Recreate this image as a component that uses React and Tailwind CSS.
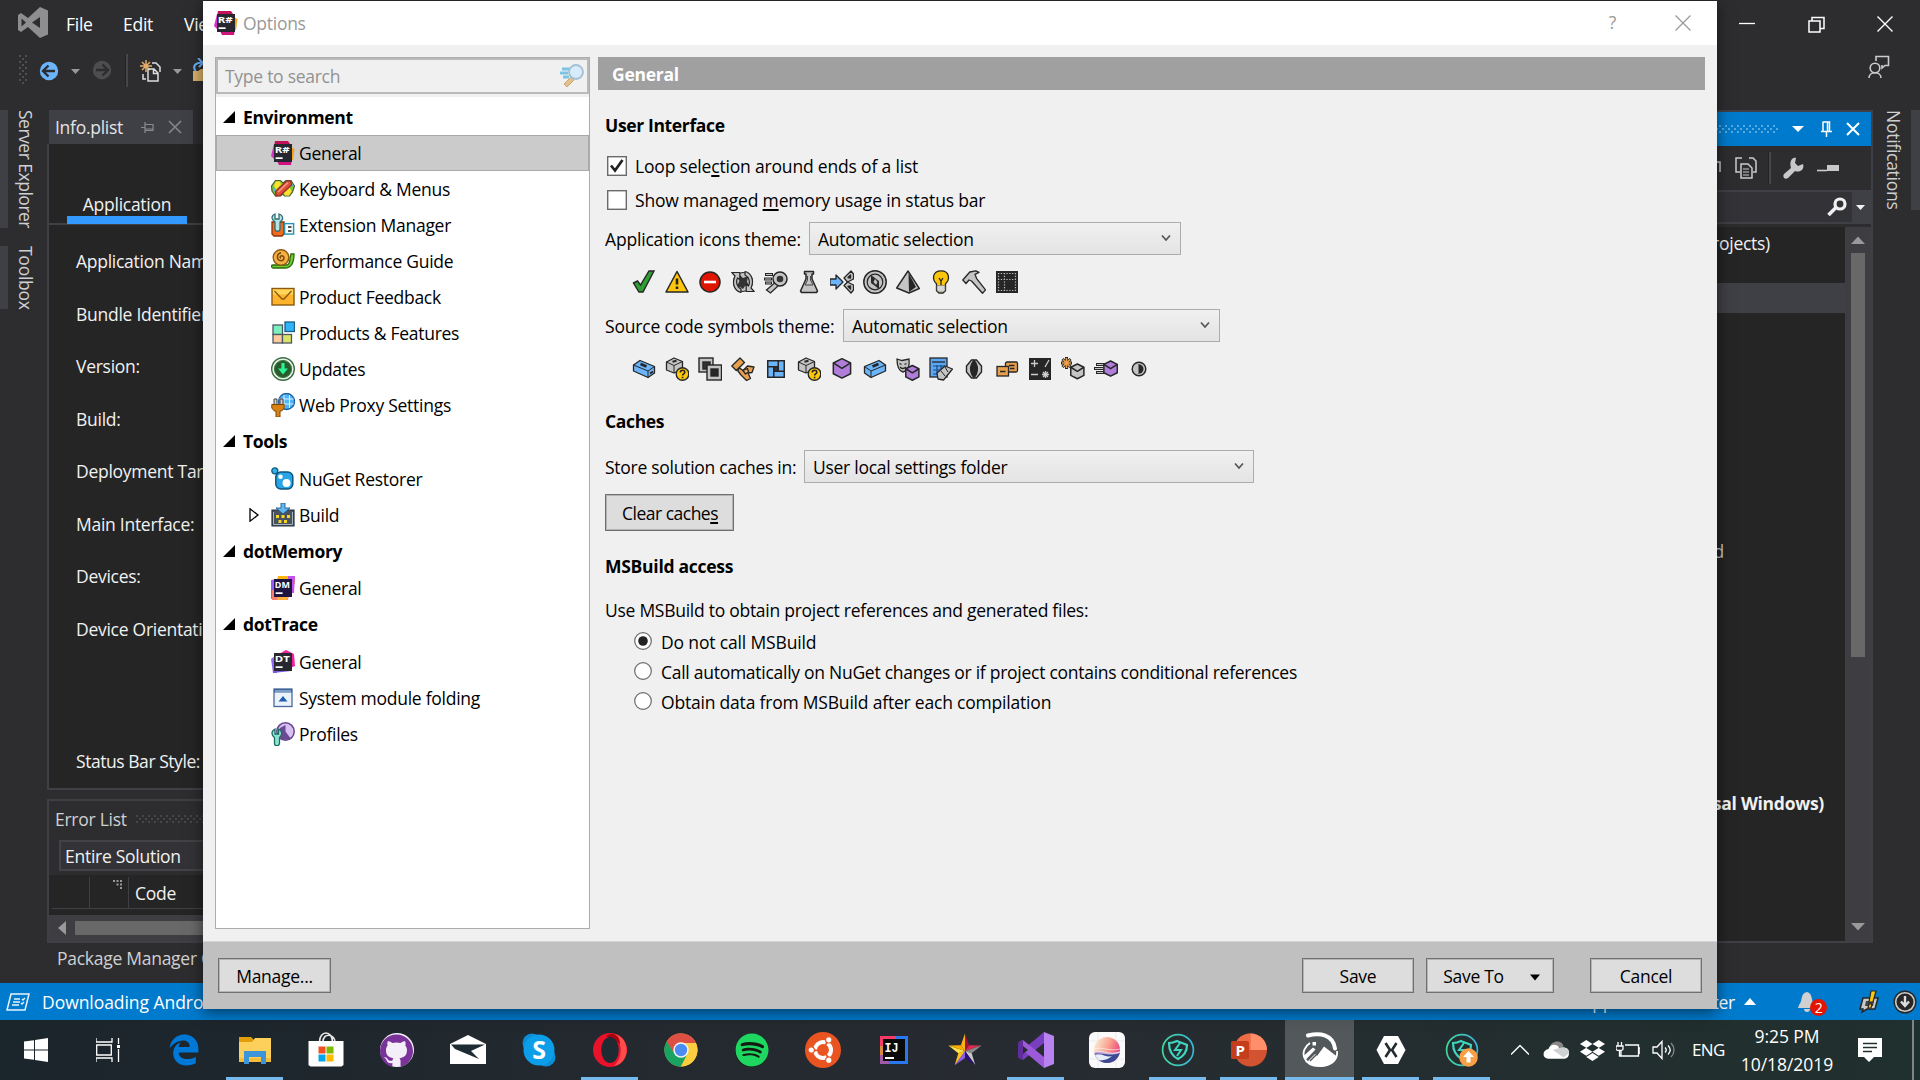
import React from "react";
import { FaSpotify, FaDropbox, FaEdgeLegacy } from "react-icons/fa6";
import { SiGithub } from "react-icons/si";

const K = "#262626";
const G = "#c4c4c4";

function Svg({ s = 24, vb = "0 0 24 24", className = "", children }) {
  return (
    <svg width={s} height={s} viewBox={vb} fill="none" className={"shrink-0 " + className}>
      {children}
    </svg>
  );
}

/* ---------- product badges ---------- */

function Badge({ label, back, dark = "#27282f" }) {
  return (
    <Svg>
      {back}
      <rect x="3" y="3" width="18" height="18" fill={dark} />
      <text x="3.8" y="11.8" fontSize="9.500" fontWeight="700" fill="#fff" letterSpacing="0" fontFamily="Open Sans, sans-serif" textLength="15" lengthAdjust="spacingAndGlyphs">{label}</text>
      <rect x="4.6" y="16.3" width="7" height="1.700" fill="#fff" />
    </Svg>
  );
}
const ReSharper = () => (
  <Badge label="R#" back={<><path d="M4 0h13l4 6H3z" fill="#c2105b" /><path d="M3 3L0 15l4 4z" fill="#dd2fc5" /><path d="M20 6l3.500 2L22 19h-3z" fill="#f7a11a" /><path d="M6 20l15-3-1 7-12 0z" fill="#d0147f" /></>} />
);
const DotMemory = () => (
  <Badge label="DM" dark="#1d1440" back={<><path d="M7 0h17v8H5z" fill="#fdb60d" /><path d="M17 0h7l-1 17h-6z" fill="#c64ff0" /><path d="M0 4l6-1v18l-6 2z" fill="#9a5bf5" /><path d="M1 14h18l-2 10H1z" fill="#fb7f6a" /><path d="M7 19h11l-2 5H6z" fill="#fdb03c" /></>} />
);
const DotTrace = () => (
  <Badge label="DT" back={<><path d="M8 4l7-4 8 4 1 12-5 2z" fill="#f31f9b" /><path d="M0 9l5-4 1 18-4 0z" fill="#8f6bf2" /><path d="M2 23l18-2-2-5H3z" fill="#7b57e8" /></>} />
);

/* ---------- options tree icons ---------- */

const Keyboard = () => (
  <Svg>
    <path d="M4.500 3.500h5L12 6l3-2.500h5L23.500 9l-2 6-3 4h-5L12 17l-2.500 2h-5L1 14 .5 9z" fill="#7ecb2c" stroke="#4b5d33" strokeWidth="1.200" />
    <path d="M5 4.500h4l1 3-5 5-2-4zM14 18.500l-1.500-3 6-5 2 4-2.500 4z" fill="#ffe02e" /><path d="M1.500 9l3 4-1.500 2zM20 5l2.500 4-3 1z" fill="#5aaef5" />
    <path d="M4.500 14.500L15.500 4h4.500l.5 4-11 10.500-4.500.5z" fill="#dd4c3c" stroke="#93321f" strokeWidth="1.200" /><path d="M7 15L17 5.500" stroke="#f39078" strokeWidth="1.800" />
  </Svg>
);
const Extension = () => (
  <Svg>
    <path d="M1 9h12v12l-2 2H3l-2-2z" fill="#f26a1b" stroke="#8c3208" strokeWidth="1.300" />
    <path d="M4 1v5h4V1c3 1 4 3 3.500 5.500L9 9v7c0 3-5 3-5 0V9L1.500 6.500C.5 4 1.500 2 4 1z" fill="#b5e4e4" stroke="#2f6f75" strokeWidth="1.300" />
    <rect x="13.600" y="10.600" width="9" height="10.500" fill="#f6fcff" stroke="#2793b5" strokeWidth="1.400" /><path d="M17 14h3.500M17 18h3.500" stroke="#222" strokeWidth="1.500" />
  </Svg>
);
const Snail = () => (
  <Svg>
    <path d="M2 16h14c3-1 3-4 3-7l1-4h3c0 9-3 14-9 14H2c-2-1-2-3 0-3z" fill="#6fce2b" stroke="#2d6b12" strokeWidth="1.300" />
    <circle cx="10" cy="8.500" r="7.800" fill="#f6b145" stroke="#8f5a12" strokeWidth="1.400" />
    <path d="M10 9c-1.500 0-1-2.500 1-2.300 3 .5 2.500 5-1 5-4.500 0-5-7 0-8" stroke="#7a4a0c" strokeWidth="1.500" />
  </Svg>
);
const MailBox = () => (
  <Svg>
    <rect x="1" y="3.500" width="22" height="16.500" fill="#fdb32c" stroke="#8a5a10" strokeWidth="1.400" />
    <path d="M2 4.500h20v5H2z" fill="#ffd55a" /><path d="M3.500 6l7.500 8h2l7.500-8" stroke="#8a5a10" strokeWidth="1.300" />
  </Svg>
);
const Products = () => (
  <Svg>
    <rect x="2" y="4" width="9.500" height="9.500" fill="#7df0c0" stroke="#4b5a60" strokeWidth="1.300" />
    <rect x="14" y="1" width="9.500" height="9.500" fill="#2fb4fa" stroke="#1d5c86" strokeWidth="1.300" />
    <rect x="2" y="13.500" width="9.500" height="8.500" fill="#fcc9a0" stroke="#4b5a60" strokeWidth="1.300" />
    <rect x="11.500" y="13.500" width="9" height="8.500" fill="#dce36a" stroke="#4b5a60" strokeWidth="1.300" />
  </Svg>
);
const Updates = () => (
  <Svg>
    <circle cx="12" cy="12" r="11.300" fill="#e8f2e8" stroke="#3c6e42" strokeWidth="1.400" /><circle cx="12" cy="12" r="8.600" fill="#285c2c" stroke="#3b7a42" />
    <path d="M10.400 6h3.200v5.500H17l-5 6-5-6h3.400z" fill="#2bf296" />
  </Svg>
);
const Proxy = () => (
  <Svg>
    <circle cx="15.500" cy="8.500" r="8" fill="#4fb6fa" stroke="#1d5d9c" strokeWidth="1.300" />
    <path d="M8.500 6h14M8.500 11h14M13 2v13M18.500 2v13" stroke="#d9f0ff" />
    <path d="M3 6h3v6H3zM9 6h3v6H9z" fill="#ccc" stroke="#444" /><path d="M.8 11.500h12.400V15l-2.500 3H9v6H5v-6H3.300L.8 15z" fill="#d98212" stroke="#7a4606" />
  </Svg>
);
const NuGet = () => (
  <Svg>
    <circle cx="3.800" cy="3.800" r="3" fill="#35b0e8" stroke="#0e5b86" strokeWidth="1.300" />
    <rect x="4.800" y="5" width="17" height="17" rx="5" fill="#27a5e6" stroke="#0b5580" strokeWidth="1.500" /><circle cx="9.500" cy="9.700" r="2.300" fill="#fff" /><circle cx="15.500" cy="16" r="4" fill="#fff" />
  </Svg>
);
const Build = () => (
  <Svg>
    <path d="M1 7h22v16H1z" fill="#49535f" stroke="#27313c" strokeWidth="1.200" /><path d="M2.500 9v12.500h19V9" stroke="#aab4c0" />
    <path d="M5 12h3v3H5zM10.500 12h3v3h-3zM16 12h3v3h-3zM7.500 17h3v3h-3zM13 17h3v3h-3z" fill="#f7d820" />
    <path d="M10 0h4v5h5l-7 6-7-6h5z" fill="#62b8f2" stroke="#205a8a" strokeWidth=".9" />
  </Svg>
);
const Folding = () => (
  <Svg>
    <rect x="3" y="3" width="18" height="17.500" fill="#eaf3fc" stroke="#48699a" strokeWidth="1.300" /><path d="M3 3h18v3.500H3z" fill="#3d6496" /><path d="M4 5h16" stroke="#bcd6f2" /><path d="M12 10l4.500 5.500h-9z" fill="#215cb0" />
  </Svg>
);
const Profiles = () => (
  <Svg>
    <circle cx="14.500" cy="9.500" r="8.700" fill="#d9bff2" stroke="#66448a" strokeWidth="1.500" /><path d="M14.500 9.500V3L9 6l-2 6 4 6 9-1z" fill="#6a4a92" />
    <path d="M4 7v5h3.500V7c4 2 4 6 1 8.500v6c-.5 3-5 3-5 0v-6C0 13 0 9 4 7z" fill="#8fe3d4" stroke="#1e6b62" strokeWidth="1.300" />
  </Svg>
);

/* ---------- icon theme preview rows ---------- */

const Question = () => (<><circle cx="17.500" cy="17" r="6.300" fill="#fdc80c" stroke={K} strokeWidth="1.400" /><path d="M15.300 15.500c0-3 4.500-3 4.500-.3 0 1.600-2.200 1.600-2.200 3.200M17.600 19.800v1.400" stroke={K} strokeWidth="1.600" /></>);
const Cube = ({ x = 0, y = 0, s = 1, c = "#b07ddb" }) => (
  <g transform={`translate(${x} ${y}) scale(${s})`} stroke={K} strokeWidth={1.5 / s} strokeLinejoin="round">
    <path d="M12 3l8 4v10l-8 4-8-4V7z" fill={c} /><path d="M4 7l8 5 8-5" />
  </g>
);
const Brick = ({ c, flip }) => (
  <g transform={flip ? "translate(24 0) scale(-1 1)" : ""} stroke={K} strokeWidth="1.300" strokeLinejoin="round">
    <path d="M1.500 8L8 3.500 22.500 9.500v6.500L16 20.500 1.500 14z" fill={c} /><path d="M1.500 8L16 14l6.500-4.500M16 14v6.500" strokeWidth="1" /><path d="M8.500 7l6 2.500" strokeWidth="2.600" />
    {!flip && <path d="M18 16.500l3-2" strokeWidth="1.800" />}
  </g>
);
const GreyBox = () => (
  <g stroke={K} strokeWidth="1.300" strokeLinejoin="round"><path d="M1.500 5L9 1l8.500 3.500V12L9 16l-7.500-3z" fill={G} /><path d="M1.500 5L9 8.500l8.500-4M9 8.500V16" strokeWidth="1" /><path d="M7.500 4.700l4-1" strokeWidth="2.200" /></g>
);

const appIcons = [
  <path d="M1.500 13l4-2 3 4L17 1h5L11 22H7z" fill="#2f9e33" stroke={K} strokeWidth="1.400" />,
  <g><path d="M12 1.500L23 22H1z" fill="#fdc50d" stroke={K} strokeWidth="1.500" strokeLinejoin="round" /><path d="M12 8.500v6M12 16.500v2.500" stroke={K} strokeWidth="2.600" /></g>,
  <g><circle cx="12" cy="12" r="10" fill="#e01500" stroke={K} strokeWidth="1.500" /><path d="M6 12h12" stroke="#fff" strokeWidth="2.600" /></g>,
  <g stroke={K} strokeWidth="1.200" strokeLinejoin="round"><circle cx="12" cy="12" r="9.500" fill={G} /><path d="M9 5l3 3 5-2-1 6 2 3-4 1-2 3-3-2-3-1 2-4z" fill="#333" stroke="none" /><path d="M.8 2.500h8v7L6.500 8C4.500 12 6 17 10 19v3.500C3 21 .8 13 4 6z" fill={G} /><path d="M23.200 21.500h-8v-7l2.300 1.500c2-4 .5-9-3.500-11V1.500c7 1.500 9.200 9.500 6 16.500z" fill={G} /></g>,
  <g><circle cx="16" cy="9" r="7" fill={G} stroke={K} strokeWidth="1.500" /><circle cx="16" cy="9" r="3.300" fill="#333" /><path d="M10.500 13l3.500 3-7.500 7-4-3z" fill={G} stroke={K} strokeWidth="1.300" /><path d="M1 4.500h8M0 9h8M1 13h7" stroke={K} strokeWidth="3.200" /><path d="M2 4.500h6M1 9h6M2 13h5" stroke={G} strokeWidth="1.100" /></g>,
  <g stroke={K} strokeWidth="1.500" strokeLinejoin="round"><path d="M7.500 1.500h9V4H15v5l5.500 12-1 1.500h-15l-1-1.500L9 9V4H7.500z" fill={G} /><path d="M10.500 6v4L8 15h8l-2.500-5V6" stroke="#444" strokeWidth="1" /></g>,
  <g stroke={K} strokeWidth="1.300" strokeLinejoin="round"><path d="M0 9h6V5l7 7-7 7v-4H0z" fill="#6cb4fa" /><path d="M14 8l7-7 2.500 3v5l-6 3zM14 15.500l7 7.500 2.500-3v-5l-6-3z" fill={G} /><path d="M18 7.500l2.500-2.500v3zM18 16.500l2.500 2.500v-3z" fill={K} /></g>,
  <g><circle cx="12" cy="12" r="11.200" fill={G} stroke={K} strokeWidth="1.500" /><circle cx="12" cy="12" r="7.800" stroke={K} strokeWidth="1.200" /><path d="M8 5l8 6v8L8 13z" fill="#2b2b2b" /><path d="M12 9l2.500 3-1.500 3-2.500-3z" fill={G} /></g>,
  <g stroke={K} strokeWidth="1.400" strokeLinejoin="round"><path d="M12 1l11.300 17.500L13 23 .7 18z" fill={G} /><path d="M12.500 3l7.500 14-7 5z" fill={K} stroke="none" /></g>,
  <g><path d="M12 .8c9 0 9 9 4.500 13v7L14 23h-4l-2.500-2.200v-7C3 10 3 .8 12 .8z" fill="#fdc50d" stroke={K} strokeWidth="1.300" /><path d="M8 15.500h8v5L14 22h-4l-2-1.500z" fill="#d6d6d6" stroke="#777" strokeWidth=".7" /><path d="M10 8l2 3 2-3M12 11v4" stroke={K} strokeWidth="1.300" /></g>,
  <g stroke={K} strokeWidth="1.300" strokeLinejoin="round"><path d="M.8 10l7-8 6-1.200 3.200 1.500-4 2 1.500 4 9 11.500-3 3.500L9.500 11 7 10l-3 3.500z" fill={G} /></g>,
  <g><rect x="1" y="1" width="22" height="22" fill={K} /><path d="M3 3.500h19M3 20.500h19M3.500 3v19M20.500 3v19M9.500 3v19M3 9.500h19" stroke="#bbb" strokeWidth="1.200" strokeDasharray="1.300 1.500" /><rect x="11" y="11" width="8" height="8" fill={K} /></g>,
];

const symbolIcons = [
  <Brick c="#6cb4fa" />,
  <><GreyBox /><Question /></>,
  <g stroke={K} strokeWidth="1.400"><rect x="1" y="1" width="14" height="14" fill={G} /><rect x="5" y="5" width="7" height="7" fill="#333" /><rect x="9" y="8" width="14.500" height="15" fill={G} /><rect x="13" y="12" width="7" height="7" fill={K} /></g>,
  <g stroke={K} strokeWidth="1.300" fill="#e9a04e" strokeLinejoin="round"><path d="M.8 9L9 1l4.500 4.500-8.200 8zM8 10.500l4 3 4.500-4.500 6.500 1-2 5.500-4 .5 2.500 5.500-4 2-5.500-5.500-3-4z" /><path d="M12 13.500l4.500-2 1 3.500-3 2z" fill="#f0b06a" /></g>,
  <g><rect x="3" y="3" width="18" height="18" fill={K} /><path d="M4.500 4.500h9V9h-9zM15 4.500h4.500v9H15zM10.500 15h9v4.500h-9zM4.500 10.500H9v9H4.500z" fill="#6cb4fa" /><path d="M10.500 10.500h3v3h-3z" fill="#333" /></g>,
  <><GreyBox /><Question /></>,
  <Cube x={-1} y={-1.600} s={1.080} />,
  <Brick c="#6cb4fa" flip />,
  <><path d="M1 2l5 1.500L13 2c1 8-2 12-6 13C3 14 1 10 1 2z" fill={G} stroke={K} strokeWidth="1.300" /><path d="M3.500 6.500l2 1M10.500 6.500l-2 1M4 10c1.500 2 4 2 6 0" stroke={K} strokeWidth="1.300" /><Cube x={6.500} y={6} s={0.820} /></>,
  <g stroke={K} strokeWidth="1.300"><rect x="1" y="1" width="17" height="19" fill="#5aa8f5" /><path d="M3 5h13" /><path d="M4 9h12M4 13h9M4 17h5M8 8v10M12 8v6" stroke="#1c4a80" strokeWidth="1.200" /><path d="M8 16l8-7 7.500 3-9 11-5.500-1z" fill={G} strokeLinejoin="round" /><path d="M16 10l3 5M12 14l4 5" strokeWidth="1" /></g>,
  <g stroke={K} strokeWidth="1.400"><path d="M9.500 3h5l5 6v6l-5 6h-5l-5-6V9z" fill={G} /><path d="M12 3.500c4.500 5 4.500 12 0 17-4.500-5-4.500-12 0-17z" fill={K} /></g>,
  <g stroke={K} strokeWidth="1.300" fill="#e9a04e"><rect x="10.500" y="5" width="12" height="10" rx="1.500" /><rect x="2" y="9.500" width="11.500" height="9.500" /><path d="M14 8.500h5.500M15 11.500h4.500M5 14.500h5.500" strokeWidth="1.500" /></g>,
  <g><rect x="1" y="1" width="22" height="22" fill={K} /><path d="M3 6.500h7M6.500 3v7M3 17.500h7M21 3l-4 7M17.500 14v7M14 17.500h7M15 15l5 5M20 15l-5 5" stroke="#ccc" strokeWidth="1.300" /></g>,
  <><path d="M5.500 0v12M0 6h11M1.500 2l8 8M9.500 2l-8 8" stroke={K} strokeWidth="3" /><path d="M5.500 1v10M1 6h9M2 2.500l7 7M9 2.500l-7 7" stroke="#e9a04e" strokeWidth="1.600" /><Cube x={6.500} y={4.500} s={0.820} c={G} /></>,
  <><path d="M2 7.500h9M0 11.500h9M2 15.500h9" stroke={K} strokeWidth="3.200" /><path d="M3 7.500h7M1 11.500h8M3 15.500h7" stroke={G} strokeWidth="1.100" /><Cube x={6.500} y={1.500} s={0.840} /></>,
  <g><circle cx="12" cy="12" r="6.800" fill={G} stroke={K} strokeWidth="1.400" /><path d="M12 7.500a4.500 4.500 0 0 1 0 9z" fill={K} /><path d="M12 7v10" stroke={K} strokeWidth="1" /></g>,
];

/* ---------- IDE window behind the dialog ---------- */

function MenuBar() {
  return (
    <div className="flex h-[48px] items-center text-white">
      <Svg s={32} vb="0 0 32 32" className="mb-[2px] ml-[17px]">
        <path fillRule="evenodd" d="M23 0l8 3.500v24L23 31 11 20l-7 5-3-2V8l3-2 7 5zM23 10L15 15.500l8 5.500zM4.500 11.500v8l4.500-4z" fill="#8e8e90" />
      </Svg>
      <span className="ml-[17px] w-[57px]">File</span>
      <span className="w-[61px]">Edit</span>
      <span>View</span>
      <div className="ml-auto flex items-center pr-[27px]">
        <Svg s={16} vb="0 0 16 16"><path d="M0 7.500h16" stroke="#fff" strokeWidth="1.300" /></Svg>
        <Svg s={17} vb="0 0 17 17" className="ml-[53px]"><path d="M1 5h11v11H1zM4 5V1.500h12v11h-4" stroke="#fff" strokeWidth="1.500" /></Svg>
        <Svg s={16} vb="0 0 16 16" className="ml-[52px]"><path d="M.5.500l15 15m0-15l-15 15" stroke="#fff" strokeWidth="1.400" /></Svg>
      </div>
    </div>
  );
}

function Toolbar() {
  return (
    <div className="flex h-[62px] items-start">
      <Dots className="mt-[7px] ml-[19px] h-[29px] w-[8px] [--dot:#505053]" />
      <Svg s={20} vb="0 0 20 20" className="mt-[13px] ml-[12px]"><circle cx="10" cy="10" r="9.200" fill="#6cb4fa" /><path d="M4.500 10H16M9.500 4.500L4 10l5.500 5.500" stroke="#2d2d30" strokeWidth="2.400" /></Svg>
      <Svg s={10} vb="0 0 10 10" className="mt-[18px] ml-[12px]"><path d="M0 3h9L4.500 8z" fill="#999" /></Svg>
      <Svg s={20} vb="0 0 20 20" className="mt-[12px] ml-[11px]"><circle cx="10" cy="10" r="9.200" fill="#4d4d50" /><path d="M4 10h11.500M10.500 4.500L16 10l-5.500 5.500" stroke="#2d2d30" strokeWidth="2.400" /></Svg>
      <div className="mt-[6px] ml-[13px] h-[33px] w-[3px] border-l border-[#222] bg-[#46464a]" />
      <Svg s={22} vb="0 0 22 22" className="mt-[12px] ml-[12px]"><path d="M6 0v12M0 6h12M2 2l8 8M10 2l-8 8" stroke="#e5ad6a" strokeWidth="1.500" /><path d="M8 9h6l4 4v8H8zM13.500 9v4.500H18M12 3h4l4 4v5M3 14v5h3" stroke="#ddd" strokeWidth="1.500" /></Svg>
      <Svg s={10} vb="0 0 10 10" className="mt-[18px] ml-[11px]"><path d="M0 3h9L4.500 8z" fill="#999" /></Svg>
      <Svg s={24} className="mt-[10px] ml-[10px]"><path d="M2.500 13c-4-6 2-9 7-8M5 0l5 5-4 4" stroke="#6cb4fa" strokeWidth="2" /><path d="M0 23V13h5l3-2h14v12z" fill="#dcb16a" /></Svg>
      <Svg s={24} className="mt-[7px] mr-[30px] ml-auto"><circle cx="9" cy="13" r="4.800" stroke="#ccc" strokeWidth="1.600" /><path d="M3 23c0-7 12-7 12 0M10 6V1.500h12.500v9H19L16 13v-3" stroke="#ccc" strokeWidth="1.600" /></Svg>
    </div>
  );
}

/* Grip texture; the dot colour comes from the --dot variable. */
const Dots = ({ className }) => (
  <div className={"bg-[image:radial-gradient(circle_at_1px_1px,var(--dot)_1px,transparent_1.2px),radial-gradient(circle_at_4px_4px,var(--dot)_1px,transparent_1.2px)] bg-[size:6px_6px] " + className} />
);

function SideTabs() {
  return (
    <div className="flex w-[47px] flex-col gap-[18px] text-[#d0d0d0]">
      <div className="flex h-[118px]"><div className="w-[8px] bg-[#3f3f46]" /><span className="ml-[6px] w-[24px] leading-[24px] tracking-[-0.5px] [writing-mode:vertical-rl]">Server Explorer</span></div>
      <div className="flex h-[63px]"><div className="w-[8px] bg-[#3f3f46]" /><span className="ml-[6px] w-[24px] leading-[24px] [writing-mode:vertical-rl]">Toolbox</span></div>
    </div>
  );
}

const fields = ["Application Name:", "Bundle Identifier:", "Version:", "Build:", "Deployment Target:", "Main Interface:", "Devices:", "Device Orientation:"];

function Editor() {
  return (
    <div className="flex h-[680px] flex-col">
      <div className="flex h-[34px]">
        <div className="ml-[2px] flex w-[144px] items-center bg-[#3f3f46] pl-[6px] text-[#e4e4e4]">
          <span className="w-[86px] pt-px">Info.plist</span>
          <Svg s={13} vb="0 0 13 13"><path d="M0 6.500h4M4 1v11M4 3.500h8v6H4M4 8h8" stroke="#8a8a8e" strokeWidth="1.200" /></Svg>
          <Svg s={14} vb="0 0 14 14" className="ml-[14px]"><path d="M1 1l12 12M13 1L1 13" stroke="#85858a" strokeWidth="1.600" /></Svg>
        </div>
        <div className="ml-[9px] h-[31px] w-[80px] bg-[#29292c]" />
      </div>
      <div className="flex-1 border-b-2 border-l-2 border-[#3f3f46] bg-[#252526] text-[#f1f1f1]">
        <div className="flex h-[81px] items-end border-b-2 border-[#3f3f46] pl-[18px]">
          <div className="-mb-px h-[35px] w-[120px] border-b-8 border-[#3399ff] text-center leading-[30px]">Application</div>
        </div>
        <div className="flex flex-col pt-[10px] pl-[27px]">
          {fields.map((f) => <span key={f} className="h-[52.500px] leading-[52px]">{f}</span>)}
          <span className="mt-[80px] h-[52px] leading-[53px] tracking-[-0.45px]">Status Bar Style:</span>
        </div>
      </div>
    </div>
  );
}

function ErrorList() {
  return (
    <div className="mt-[9px] flex h-[144px] flex-col border-2 border-[#3f3f46]">
      <div className="flex h-[36px] items-center pl-[6px] text-[#d0d0d0]">
        <span className="w-[81px]">Error List</span>
        <Dots className="h-[9px] w-[400px] [--dot:#46464a]" />
      </div>
      <div className="mt-[3px] ml-[10px] h-[31px] w-[300px] border-2 border-[#434346] bg-[#333337] pl-[4px] leading-[28px] text-[#f1f1f1]">Entire Solution</div>
      <div className="mt-[4px] flex h-[40px] bg-[#252526] pl-[3px]">
        <div className="mt-[2px] flex h-[32px] w-full border-b border-[#3f3f46] text-[#f1f1f1]">
          <div className="w-[38px] border-r border-[#3f3f46]" />
          <div className="flex w-[39px] justify-end border-r border-[#3f3f46] pt-[3px] pr-[5px]">
            <Svg s={10} vb="0 0 10 10"><path d="M0 1h2M3.500 1h2M7 1h2M3.500 4.500h2M7 4.500h2M7 8h2" stroke="#999" strokeWidth="1.800" /></Svg>
          </div>
          <span className="pl-[6px] leading-[33px]">Code</span>
        </div>
      </div>
      <div className="flex flex-1 items-start bg-[#3e3e42] pt-[6px]">
        <Svg s={14} vb="0 0 14 14" className="ml-[6px]"><path d="M11 0v14L3 7z" fill="#999" /></Svg>
        <div className="ml-[6px] h-[14px] w-[600px] bg-[#686868]" />
      </div>
    </div>
  );
}

function SolutionExplorer() {
  return (
    <div className="flex h-[833px] w-[300px] flex-col border-2 border-[#3f3f46]">
      <div className="flex h-[34px] items-center bg-[#007acc] pr-[11px]">
        <Dots className="h-[9px] w-[204px] [--dot:#59a8de]" />
        <Svg s={12} vb="0 0 12 12" className="ml-[13px]"><path d="M0 3h12L6 9z" fill="#fff" /></Svg>
        <Svg s={16} vb="0 0 16 16" className="ml-auto"><path d="M4.500 1h7v9M5 1v9M9.500 1v9M3 10.500h11M8.500 10v6" stroke="#fff" strokeWidth="1.500" /></Svg>
        <Svg s={14} vb="0 0 14 14" className="ml-[12px]"><path d="M1 1l12 12M13 1L1 13" stroke="#fff" strokeWidth="2" /></Svg>
      </div>
      <div className="flex h-[44px] items-center justify-end pr-[32px]">
        <Svg s={16} vb="0 0 16 16"><path d="M2 2h12v10" stroke="#ccc" strokeWidth="1.500" /></Svg>
        <Svg s={22} vb="0 0 22 22" className="ml-[13px]"><path d="M5 15H1V1h6M14 1h4l3 3v11h-3" stroke="#ccc" strokeWidth="1.500" /><path d="M6 7h7l4 4v10H6z" stroke="#ccc" strokeWidth="1.500" /><path d="M8 12h6M8 15h6M8 18h6" stroke="#ccc" strokeWidth="1.200" /></Svg>
        <div className="ml-[11px] h-[32px] w-[3px] border-l border-[#222] bg-[#46464a]" />
        <Svg s={22} vb="0 0 22 22" className="ml-[11px]"><path d="M14 1l-1 5 3 3 5-2c2 6-4 9-8 7l-7 7c-3 2-6-1-4-4l7-6C7 5 10 0 14 1z" fill="#c8c8c8" /></Svg>
        <Svg s={22} vb="0 0 22 22" className="ml-[13px]"><path d="M0 13.500h10" stroke="#ccc" strokeWidth="1.600" /><path d="M10 8h12v6H10z" fill="#c8c8c8" /></Svg>
      </div>
      <div className="flex h-[34px] items-center border-y-2 border-[#3f3f46] bg-[#3f3f46]">
        <div className="flex h-[30px] flex-1 items-center justify-end bg-[#333337] pr-[5px]">
          <Svg s={20} vb="0 0 20 20"><circle cx="13" cy="7" r="5" stroke="#f1f1f1" strokeWidth="3.200" /><path d="M9 10.500L1.500 18" stroke="#f1f1f1" strokeWidth="3.600" /></Svg>
        </div>
        <Svg s={10} vb="0 0 10 10" className="mr-[5px] ml-[4px]"><path d="M0 3h9L4.500 8z" fill="#f1f1f1" /></Svg>
      </div>
      <div className="mt-[3px] flex flex-1">
        <div className="flex flex-1 flex-col bg-[#252526] text-right text-[#f1f1f1]">
          <div className="h-[56px] pr-[75px] leading-[33px]">projects)</div>
          <div className="h-[30px] bg-[#3f3f46]" />
          <div className="mt-[225px] pr-[121px] leading-[26px] text-[#c8c8c8]">d</div>
          <div className="mt-[226px] pr-[21px] leading-[26px] font-bold">(Universal Windows)</div>
        </div>
        <div className="flex w-[26px] flex-col items-center bg-[#3e3e42] pr-px">
          <Svg s={14} vb="0 0 14 14" className="mt-[6px]"><path d="M0 11h14L7 3.500z" fill="#999" /></Svg>
          <div className="mt-[6px] h-[404px] w-[14px] bg-[#686868]" />
          <Svg s={14} vb="0 0 14 14" className="mt-auto mb-[7px]"><path d="M0 3h14l-7 7.500z" fill="#999" /></Svg>
        </div>
      </div>
    </div>
  );
}

function StatusBar() {
  return (
    <div className="flex h-[37px] shrink-0 items-center bg-[#007acc] text-white">
      <Svg s={24} className="ml-[6px]"><path d="M5 4h18l-4 16H1z" stroke="#e8f3fb" strokeWidth="1.500" /><path d="M8 9h6M7 12h7M6 15h7M16 9l1 1 2-2M15 13l1 1 2-2" stroke="#e8f3fb" strokeWidth="1.300" /></Svg>
      <span className="ml-[12px] pt-[2px] tracking-[-0.05px]">Downloading Android</span>
      <span className="mr-[66px] ml-auto pt-[2px]">App</span>
      <span className="pt-[2px]">master</span>
      <Svg s={12} vb="0 0 12 12" className="ml-[9px]"><path d="M0 9h12L6 2z" fill="#fff" /></Svg>
      <div className="relative ml-[41px] h-[24px] w-[32px]">
        <Svg><path d="M2 15c4-4 1-12 8-13 6 1 4 9 7 13v3H1zM7 19h6c0 4-6 4-6 0z" fill="#d0d0d0" /></Svg>
        <span className="absolute top-[9px] left-[13px] size-[17px] rounded-full bg-[#e51400] text-center text-[14px] leading-[17px]">2</span>
      </div>
      <Svg className="ml-[29px]"><path d="M5 8h15l-3 11H9l-5 3 1-3H2z" fill="#c8c8c8" stroke={K} strokeWidth="1.500" /><path d="M8 11h8l-1 5H7z" fill="#444" /><path d="M13 1h5l-3 11h-4zM11 14h3l-1 4h-3z" fill="#fdc80c" stroke={K} strokeWidth="1.200" /></Svg>
      <Svg className="mr-[3px] ml-[11px]"><circle cx="12" cy="12" r="11.500" fill={K} /><circle cx="12" cy="12" r="9.300" stroke="#ccc" strokeWidth="1.600" /><path d="M12 6v9M8 11.500l4 4.500 4-4.500" stroke="#ddd" strokeWidth="2.400" /></Svg>
    </div>
  );
}

function Ide() {
  return (
    <div className="flex h-[1020px] flex-col bg-[#2d2d30]">
      <MenuBar />
      <Toolbar />
      <div className="flex flex-1">
        <SideTabs />
        <div className="w-[600px]">
          <Editor />
          <ErrorList />
          <div className="pl-[10px] leading-[31px] text-[#d0d0d0]">Package Manager C</div>
        </div>
        <div className="ml-auto"><SolutionExplorer /></div>
        <div className="flex h-[100px] w-[47px]">
          <span className="ml-[9px] w-[24px] leading-[24px] text-[#d0d0d0] [writing-mode:vertical-rl]">Notifications</span>
          <div className="ml-auto w-[9px] bg-[#3f3f46]" />
        </div>
      </div>
      <StatusBar />
    </div>
  );
}

/* ---------- options dialog ---------- */

const tree = [
  { h: "Environment", gap: "pt-0", items: [["General", <ReSharper />, true], ["Keyboard & Menus", <Keyboard />], ["Extension Manager", <Extension />], ["Performance Guide", <Snail />], ["Product Feedback", <MailBox />], ["Products & Features", <Products />], ["Updates", <Updates />], ["Web Proxy Settings", <Proxy />]] },
  { h: "Tools", gap: "pt-[2px]", items: [["NuGet Restorer", <NuGet />], ["Build", <Build />, false, true]] },
  { h: "dotMemory", gap: "pt-px", items: [["General", <DotMemory />]] },
  { h: "dotTrace", gap: "pt-[2px]", items: [["General", <DotTrace />], ["System module folding", <Folding />], ["Profiles", <Profiles />]] },
];

function Tree() {
  return (
    <div className="flex w-[375px] flex-col border border-[#acacac]">
      <div className="flex h-[36px] items-center justify-between border-2 border-[#bababa] bg-[#f0f0f0] pr-[3px] pl-[7px] text-[#929292]">
        <span>Type to search</span>
        <Svg><path d="M2 5h8M0 9h8M3 13h6" stroke="#7cc4e4" strokeWidth="3" /><path d="M11 13l3 3-7 7-3-3z" fill="#e3c08a" stroke="#cba873" /><circle cx="16" cy="8" r="7" fill="#d7ecfa" stroke="#a3bfd6" strokeWidth="1.800" /></Svg>
      </div>
      <div className="mt-[3px] flex-1 bg-white pt-[2px]">
        {tree.map((g) => (
          <div key={g.h}>
            <div className="flex h-[36px] items-center pl-[7px] font-bold tracking-[-0.35px]">
              <Svg s={12} vb="0 0 12 12"><path d="M12 0v12H0z" fill="#000" /></Svg>
              <span className="ml-[8px]">{g.h}</span>
            </div>
            <div className={g.gap}>
              {g.items.map(([t, icon, sel, more], i) => (
                <div key={i} className={"flex h-[36px] items-center border pl-[54px] " + (sel ? "border-[#a9a9a9] bg-[#cbcbcb]" : "border-transparent")}>
                  {more && <Svg s={14} vb="0 0 12 14" className="mr-[10px] -ml-[24px]"><path d="M2 .8v12.400L10 7z" stroke="#000" strokeWidth="1.300" /></Svg>}
                  {icon}
                  <span className="ml-[4px]">{t}</span>
                </div>
              ))}
            </div>
          </div>
        ))}
      </div>
    </div>
  );
}

const Select = ({ className, children }) => (
  <div className={"flex h-[33px] items-center justify-between border border-[#acacac] bg-linear-to-b from-[#f0f0f0] to-[#e4e4e4] pr-[9px] pl-[8px] " + className}>
    <span className="pt-[2px]">{children}</span>
    <Svg s={10} vb="0 0 10 10" className="mb-[2px]"><path d="M1 2.500L5 7l4-4.500" stroke="#555" strokeWidth="1.700" /></Svg>
  </div>
);
const U = ({ children }) => <span className="underline decoration-2 underline-offset-2">{children}</span>;
const Check = ({ on }) => (
  <Svg s={20} vb="0 0 20 20" className="mr-[8px]"><rect x=".7" y=".7" width="18.600" height="18.600" fill="#fff" stroke="#6a6a6a" strokeWidth="1.400" />{on && <path d="M4 9.500l4 5L15.500 4" stroke="#222" strokeWidth="2.700" />}</Svg>
);
const Radio = ({ on, children }) => (
  <div className="flex h-[30px] items-center pl-[29px]">
    <Svg s={18} vb="0 0 18 18"><circle cx="9" cy="9" r="8.300" fill="#fff" stroke="#6a6a6a" strokeWidth="1.200" />{on && <circle cx="9" cy="9" r="4.800" fill="#222" />}</Svg>
    <span className="ml-[9px] pt-[2px]">{children}</span>
  </div>
);
const Button = ({ className = "", h = "h-[35px]", children }) => (
  <div className={"flex items-center justify-center border border-[#707070] bg-[#dddddd] pt-px shadow-[inset_0_0_0_1px_#b4b4b4] " + h + " " + className}>{children}</div>
);

function GeneralPage() {
  return (
    <div className="ml-[8px] w-[1107px]">
      <div className="h-[33px] bg-[#a0a0a0] pl-[14px] leading-[35px] font-bold text-white">General</div>
      <div className="pl-[7px]">
        <div className="mt-[23px] leading-[24px] font-bold tracking-[-0.35px]">User Interface</div>
        <div className="mt-[12px] flex h-[34px] items-center pl-[2px]"><Check on /><span className="tracking-[-0.18px]">Loop sele<U>c</U>tion around ends of a list</span></div>
        <div className="flex h-[34px] items-center pl-[2px]"><Check /><span className="tracking-[-0.18px]">Show managed <U>m</U>emory usage in status bar</span></div>
        <div className="mt-[5px] flex items-center"><span className="w-[204px] pt-[2px] tracking-[-0.18px]">Application icons theme:</span><Select className="w-[372px]">Automatic selection</Select></div>
        <div className="mt-[15px] flex gap-[9px] pl-[27px]">{appIcons.map((c, i) => <Svg key={i}>{c}</Svg>)}</div>
        <div className="mt-[15px] flex items-center"><span className="w-[238px] pt-[2px] tracking-[-0.18px]">Source code symbols theme:</span><Select className="w-[377px]">Automatic selection</Select></div>
        <div className="mt-[15px] flex gap-[9px] pl-[27px]">{symbolIcons.map((c, i) => <Svg key={i}>{c}</Svg>)}</div>
        <div className="mt-[28px] leading-[24px] font-bold tracking-[-0.35px]">Caches</div>
        <div className="mt-[17px] flex items-center"><span className="w-[199px] pt-[2px]">Store solution caches in:</span><Select className="w-[450px]">User local settings folder</Select></div>
        <Button h="h-[37px]" className="mt-[11px] w-[129px] tracking-[-0.5px]"><span className="ml-px">Clear cache<U>s</U></span></Button>
        <div className="mt-[23px] leading-[24px] font-bold">MSBuild access</div>
        <div className="mt-[20px] leading-[24px]">Use MSBuild to obtain project references and generated files:</div>
        <div className="mt-[4px]">
          <Radio on><span className="tracking-[-0.15px]">Do not call MSBuild</span></Radio>
          <Radio>Call automatically on NuGet changes or if project contains conditional references</Radio>
          <Radio><span className="tracking-[-0.2px]">Obtain data from MSBuild after each compilation</span></Radio>
        </div>
      </div>
    </div>
  );
}

function OptionsDialog() {
  return (
    <div className="absolute top-px left-[203px] flex h-[1008px] w-[1514px] flex-col bg-[#f0f0f0] text-black shadow-[0_3px_14px_rgba(0,0,0,0.55)]">
      <div className="flex h-[44px] items-center bg-white pl-[11px]">
        <ReSharper />
        <span className="ml-[5px] text-[#999]">Options</span>
        <span className="mb-px ml-auto text-[#999]">?</span>
        <Svg s={16} vb="0 0 16 16" className="mr-[26px] ml-[59px]"><path d="M.5.500l15 15m0-15l-15 15" stroke="#999" strokeWidth="1.200" /></Svg>
      </div>
      <div className="flex h-[884px] pt-[12px] pl-[12px]"><Tree /><GeneralPage /></div>
      <div className="mt-[12px] flex flex-1 items-center border-t border-[#d4d4d4] bg-[#c0c0c0] pr-[15px] pl-[15px]">
        <Button className="w-[113px]">Manage...</Button>
        <Button className="ml-auto w-[112px]">Save</Button>
        <Button className="ml-[12px] w-[128px]"><span className="ml-[3px]">Save To</span><Svg s={10} vb="0 0 10 10" className="mt-px ml-[26px]"><path d="M0 2.500h10L5 8.500z" fill="#000" /></Svg></Button>
        <Button className="ml-[36px] w-[112px]">Cancel</Button>
      </div>
    </div>
  );
}

/* ---------- taskbar ---------- */

const Shield = ({ up }) => (
  <Svg s={34} vb="0 0 34 34">
    <defs><linearGradient id="teal" x1="0" x2="1"><stop offset="0" stopColor="#43d69c" /><stop offset="1" stopColor="#38b6d8" /></linearGradient></defs>
    <circle cx="17" cy="17" r="15.400" stroke="url(#teal)" strokeWidth="1.700" />
    <path d="M8 10c4 0 6-1 8-2 4 2 6 2 10 4 0 7-3 11-9 14-6-3-9-8-9-16z" stroke="#3fd6c0" strokeWidth="2.200" /><path d="M19 10l-5 7h6l-4 6" stroke="#3fd6c0" strokeWidth="2" />
    {up && <><circle cx="23.500" cy="24.500" r="9.300" fill="#f99f45" /><path d="M23.500 18l-5.500 6h3.500v5.500h4V24H29z" fill="#fff" /></>}
  </Svg>
);

const apps = [
  [<Svg><path d="M0 3.500l10-1.300V11.500H0zM11 2L24 0v11.500H11zM0 12.500h10v9.300L0 20.500zM11 12.500h13V24l-13-2z" fill="#fff" /></Svg>],
  [<Svg><path d="M0 0v4h16V0M0 24v-4h16v4M.7 7h14.600v10H.7zM22.500 0v6M22.500 11v13" stroke="#fff" strokeWidth="1.300" /><rect x="21" y="7" width="3" height="3" fill="#fff" /></Svg>],
  [<FaEdgeLegacy size={32} color="#0078d7" />],
  [<Svg s={32} vb="0 0 32 32"><path d="M0 3h12l3 3v6H0z" fill="#e09f08" /><path d="M0 8h13l3-4h16v24H0z" fill="#fdd05c" /><path d="M0 24h32v4H0z" fill="#f5bd3a" /><path d="M5 30V17h22v13h-5v-7H10v7z" fill="#3c95d8" /></Svg>, "w"],
  [<Svg s={36} vb="0 0 36 36"><path d="M11.500 10c0-12 13-12 13 0M15 10c0-10 12-8 12 0" stroke="#e8e8e8" strokeWidth="1.600" /><path d="M.5 9h35v24l-2 1.500h-31L.5 33z" fill="#fff" /><path d="M10.500 14.500h7v7h-7z" fill="#f25022" /><path d="M18.500 14.500h7v7h-7z" fill="#7fba00" /><path d="M10.500 22.500h7v7h-7z" fill="#00a4ef" /><path d="M18.500 22.500h7v7h-7z" fill="#ffb900" /></Svg>],
  [<span className="flex size-[34px] items-center justify-center rounded-full bg-[#f4eef8]"><SiGithub size={33} color="#7a3399" /></span>],
  [<Svg s={36} vb="0 0 36 36"><path d="M0 12L18 3l18 9v20H0z" fill="#fff" /><path d="M1 12.500h34L21 19l8 8-24-10z" fill="#1d2b33" /></Svg>],
  [<Svg s={34} vb="0 0 34 34"><circle cx="10" cy="10" r="9.500" fill="#0a8fd6" /><circle cx="24" cy="24" r="9.500" fill="#0a8fd6" /><circle cx="17" cy="17" r="15.500" fill="#0c9ee8" /><text x="17" y="26" textAnchor="middle" fontSize="25" fontWeight="700" fill="#fff" fontFamily="Open Sans, sans-serif">S</text></Svg>],
  [<Svg s={36} vb="0 0 36 36"><ellipse cx="18" cy="18" rx="17" ry="17" fill="#e8122a" /><path d="M22 2c17 3 17 29 0 32 9-9 9-23 0-32z" fill="#ff4b4b" /><path d="M14 4c8-5 14 0 14 8z" fill="#a80410" /><ellipse cx="18" cy="18" rx="8.800" ry="13" fill="#1e2b33" /></Svg>, "w"],
  [<Svg s={34} vb="0 0 34 34"><circle cx="17" cy="17" r="16.500" fill="#fdcd40" /><path d="M2.500 9A16.500 16.500 0 0 1 32 10H17L10.500 21z" fill="#dd4f43" /><path d="M2.700 8.500A16.500 16.500 0 0 0 17 33.500L23.500 21 10 20z" fill="#1aa261" /><path d="M17 33.500A16.500 16.500 0 0 0 32 10H18l5.500 11z" fill="#fdcd40" /><circle cx="17" cy="17" r="7.700" fill="#f4f4f4" /><circle cx="17" cy="17" r="6.200" fill="#4c8bf5" /></Svg>],
  [<span className="flex size-[33px] items-center justify-center rounded-full bg-[#121a12]"><FaSpotify size={34} color="#1ed760" className="shrink-0" /></span>],
  [<Svg s={36} vb="0 0 36 36"><circle cx="18" cy="18" r="18" fill="#e95420" /><circle cx="18" cy="18" r="8" stroke="#fff" strokeWidth="4" strokeDasharray="14.750 2" strokeDashoffset="8" /><circle cx="6.200" cy="18" r="3.200" fill="#fff" stroke="#e95420" strokeWidth="1.200" /><circle cx="23.800" cy="7.800" r="3.200" fill="#fff" stroke="#e95420" strokeWidth="1.200" /><circle cx="23.800" cy="28.200" r="3.200" fill="#fff" stroke="#e95420" strokeWidth="1.200" /></Svg>],
  [<Svg s={28} vb="0 0 28 28"><path d="M0 0h18v28H0z" fill="#f83a68" /><path d="M16 0h12v28H4l12-10z" fill="#2a78f0" /><path d="M0 10h4v9H0z" fill="#d98a3a" /><path d="M0 19h5l5 9H0z" fill="#a05aa8" /><rect x="3" y="3" width="22" height="22" fill="#0a0a0a" /><text x="4.500" y="15.500" fontSize="13" fontWeight="700" fill="#fff" letterSpacing="0" fontFamily="Liberation Mono, monospace" textLength="14" lengthAdjust="spacingAndGlyphs">IJ</text><path d="M5 22h9" stroke="#fff" strokeWidth="2" /></Svg>],
  [<Svg s={34} vb="0 0 34 34"><path d="M17 .5V18l-4.100-5.700z" fill="#fdb515" /><path d="M17 .5V18l4.100-5.700z" fill="#a3123a" /><path d="M33.600 12.600L17 18l4.100-5.700z" fill="#dc2a4e" /><path d="M33.600 12.600L17 18l6.700 2.200z" fill="#888" /><path d="M27.300 32.200L17 18l6.700 2.200z" fill="#c9c9c9" /><path d="M27.300 32.200L17 18v7z" fill="#2b0f73" /><path d="M6.700 32.200L17 18v7z" fill="#8a5cf0" /><path d="M6.700 32.200L17 18l-6.700 2.200z" fill="#fdc51a" /><path d="M.4 12.600L17 18l-6.700 2.200z" fill="#ffe24a" /><path d="M.4 12.600L17 18l-4.100-5.700z" fill="#f9ae00" /></Svg>],
  [<Svg s={36} vb="0 0 36 36"><path d="M26 0l10 4v28l-10 4z" fill="#b883f0" /><path d="M26 0v11L5 28l-4-2v-5z" fill="#7a3fc0" /><path d="M1 10l4-2 21 17v11L1 15z" fill="#9b5ad8" /><path d="M0 10.500l5-2.500v20l-5-2.500z" fill="#5f2d9c" /><path d="M5 14v8l5-4z" fill="#272b31" /></Svg>, "w"],
  [<Svg s={36} vb="0 0 36 36"><defs><linearGradient id="orb" x1="0" y1="0.300" x2="1" y2="0.700"><stop offset="0" stopColor="#f8ead2" /><stop offset=".5" stopColor="#f9a08e" /><stop offset="1" stopColor="#e8357c" /></linearGradient><clipPath id="disc"><circle cx="18" cy="18" r="13" /></clipPath></defs><rect width="36" height="36" rx="6" fill="#fafafa" /><path d="M0 9h36M0 27h36M9 0v36M27 0v36" stroke="#e4e4ea" strokeWidth=".7" /><g clipPath="url(#disc)"><path d="M5 5h26v26H5z" fill="url(#orb)" /><path d="M5 20c8-3 14 4 26-1v12H5z" fill="#c9a8d8" /><path d="M5 22c9-2 14 3 26-1v10H5z" fill="#3c4a94" /><path d="M5 23c8-3 12 3 18 1-4 4-12 6-18 3z" fill="#e8edf8" /><path d="M5 17c8-3 14 3 26 0M5 20c9-3 14 4 26 0" stroke="#fff" strokeOpacity=".6" /></g></Svg>],
  [<Shield />, "w"],
  [<Svg s={36} vb="0 0 36 36"><circle cx="19.500" cy="18" r="16.500" fill="#d35230" /><path d="M19.500 1.500V18H3a16.500 16.500 0 0 1 16.500-16.500z" fill="#ed6c47" /><path d="M19.500 1.500A16.500 16.500 0 0 1 36 18H19.500z" fill="#ff8f6b" /><rect x="0" y="9" width="18" height="18" rx="1.500" fill="#c43e1c" /><text x="9" y="23.500" textAnchor="middle" fontSize="15" fontWeight="700" fill="#fff" fontFamily="Open Sans, sans-serif">P</text></Svg>, "w"],
  [<Svg s={36} vb="0 0 36 36"><path d="M6 3.500c12-3 25-1 27 13" stroke="#fff" strokeWidth="4" strokeLinecap="round" /><path d="M8 11C-3 18 0 34 18 34c12 0 18-7 17-15" stroke="#fff" strokeWidth="1.800" /><path d="M1.500 24L11 15.500l2.500 2L3.500 28z" fill="#fff" /><path d="M5 30l8-8 2 2 7-9.500 13 10C32 32 26 34.500 18 34.500c-6 0-10-1-13-4.500z" fill="#fff" /><path d="M8 29l6-6" stroke="#53585b" strokeWidth="1.500" /><rect x="10.500" y="10" width="3.500" height="3.500" fill="#fff" /></Svg>, "a"],
  [<Svg s={30} vb="0 0 30 30"><path d="M8 1h14l7.500 14L22 29H8L.5 15z" fill="#fff" /><path d="M9.500 8l4.500 7-4.500 7M20.500 8L16 15l4.500 7" stroke="#252c2f" strokeWidth="2.600" /></Svg>, "w"],
  [<Shield up />, "w"],
];

function Taskbar() {
  return (
    <div className="flex h-[60px] bg-linear-to-r from-[#1b252c] via-[#272b31] to-[#20302e] text-white">
      {apps.map(([icon, run], i) => (
        <div key={i} className={"flex flex-col items-center " + (i === 0 ? "w-[72px]" : i === 1 ? "w-[76px]" : "w-[71px]")}>
          <div className={"flex h-[57px] items-center justify-center pt-[3px] " + (run === "a" ? "w-[69px] bg-[#53585b]" : i === 1 ? "w-[72px] pr-[4px]" : "w-[68px]")}>{icon}</div>
          {run && <div className={"h-[3px] bg-[#76b9ed] " + (run === "a" ? "w-[69px]" : "w-[57px]")} />}
        </div>
      ))}
      <div className="ml-auto flex items-center">
        <Svg s={18} vb="0 0 18 18"><path d="M0 13.500l9-9 9 9" stroke="#fff" strokeWidth="1.400" /></Svg>
        <Svg s={26} className="ml-[14px]"><path d="M6 10c1-7 12-8 13-1z" fill="#888" /><path d="M5 20c-6 0-6-8 0-9 2-5 8-5 10-1 7-1 9 1 9 5 0 3-2 5-4 5z" fill="#fff" /><path d="M9 12l10 7 5-4c0-4-3-6-8-5z" fill="#cfd2d3" /></Svg>
        <FaDropbox size={25} className="ml-[11px] shrink-0" />
        <Svg className="ml-[11px]"><path d="M9 7h13.500v11H5v-6M22.500 10H24v5h-1.500M2 4v4M5.500 4v4M0 8h7v3c0 2-7 2-7 0zM3.500 12v6H6" stroke="#fff" strokeWidth="1.300" /></Svg>
        <Svg className="ml-[12px]"><path d="M1 9h4l5-5.500v17L5 15H1z" stroke="#fff" strokeWidth="1.300" /><path d="M13 9.500c1.500 1.500 1.500 3.500 0 5M16 7.500c3 3 3 6 0 9" stroke="#fff" strokeWidth="1.300" /><path d="M19 5c4 4 4 10 0 14" stroke="#888" strokeWidth="1.300" /></Svg>
        <span className="ml-[16px] w-[35px] text-[17px] tracking-[-0.6px]">ENG</span>
        <div className="ml-[9px] w-[102px] text-center leading-[28px] tracking-[-0.05px]">9:25 PM<br />10/18/2019</div>
        <Svg className="ml-[20px]"><path d="M0 0h24v19h-8l-5 5-5-5H0z" fill="#fff" /><path d="M5 5.500h14M5 9.500h14M5 13.500h9" stroke="#23302f" strokeWidth="1.400" /></Svg>
        <div className="ml-[30px] h-full w-[8px] border-l-2 border-[#7d8585]" />
      </div>
    </div>
  );
}

export default function App() {
  return (
    <div className="relative h-[1080px] w-[1920px] overflow-hidden font-['Open_Sans','Noto_Sans',sans-serif] text-[17.5px] tracking-[-0.27px] whitespace-nowrap">
      <Ide />
      <OptionsDialog />
      <Taskbar />
    </div>
  );
}
